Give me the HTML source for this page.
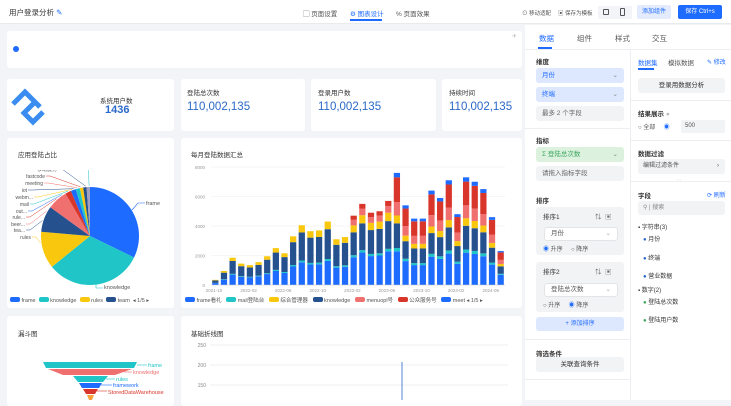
<!DOCTYPE html>
<html><head><meta charset="utf-8">
<style>
*{margin:0;padding:0;box-sizing:border-box}
body{width:731px;height:400px;overflow:hidden;background:#f2f4f7;font-family:"Liberation Sans","Noto Sans CJK SC",sans-serif;font-size:7px;color:#333;position:relative}
.a{position:absolute}
.card{position:absolute;background:#fff;border-radius:3px}
.t{position:absolute;white-space:nowrap}
.pill{position:absolute;border-radius:3px;padding-left:6px;line-height:15px;font-size:6.5px}
</style></head><body>
<!-- top bar -->
<div class="a" style="left:0;top:0;width:731px;height:24px;background:#fff;border-bottom:1px solid #e8eaee"></div>
<div class="t" style="left:9px;top:7px;font-size:7.5px">用户登录分析 <span style="color:#1e6bff">✎</span></div>
<div class="t" style="left:303px;top:8px;font-size:6.5px;color:#555">▢ 页面设置</div>
<div class="t" style="left:350px;top:8px;font-size:6.5px;color:#1e6bff">⚙ 图表设计</div>
<div class="a" style="left:350px;top:19px;width:32px;height:1.5px;background:#1e6bff"></div>
<div class="t" style="left:396px;top:8px;font-size:6.5px;color:#555">% 页面效果</div>
<div class="t" style="left:522px;top:9px;font-size:5.5px;color:#555">⊙ 移动适配</div>
<div class="t" style="left:558px;top:9px;font-size:5.5px;color:#555">▣ 保存为模板</div>
<div class="a" style="left:598px;top:6px;width:34px;height:13px;background:#f2f4f7;border-radius:2px"></div>
<div class="a" style="left:603px;top:9px;width:6px;height:6px;border:1px solid #555;border-radius:1px"></div>
<div class="a" style="left:620px;top:8px;width:5px;height:8px;border:1px solid #555;border-radius:1px"></div>
<div class="a" style="left:637px;top:5px;width:34px;height:14px;background:#e3ebfd;border-radius:2px;color:#1e6bff;font-size:6px;text-align:center;line-height:14px">添加组件</div>
<div class="a" style="left:678px;top:5px;width:44px;height:14px;background:#1e6bff;border-radius:2px;color:#fff;font-size:6px;text-align:center;line-height:14px">保存 Ctrl+s</div>

<!-- banner -->
<div class="card" style="left:7px;top:31px;width:515px;height:37px"></div>
<div class="a" style="left:13px;top:46px;width:6px;height:6px;border-radius:50%;background:#1e6bff"></div>
<div class="t" style="left:512px;top:33px;color:#bbb;font-size:6px">✈</div>

<!-- KPIs -->
<div class="card" style="left:7px;top:79px;width:167px;height:52px"></div>
<svg class="a" style="left:10px;top:84px" width="44" height="44" viewBox="0 0 44 44">
<g fill="none" stroke="#3a8cf0" stroke-width="5" stroke-linejoin="miter">
<polyline points="3,20 15,8 30,23"/>
<polyline points="25,18 14,29 23,38 33,28"/>
</g></svg>
<div class="t" style="left:100px;top:95px;font-size:6.5px">系统用户数</div>
<div class="t" style="left:105px;top:104px;font-size:11px;color:#2a68c8;font-weight:bold">1436</div>
<div class="card" style="left:181px;top:79px;width:124px;height:52px"></div>
<div class="t" style="left:187px;top:87px;font-size:6.5px">登陆总次数</div>
<div class="t" style="left:187px;top:101px;font-size:11.5px;color:#2a68c8">110,002,135</div>
<div class="card" style="left:311px;top:79px;width:125px;height:52px"></div>
<div class="t" style="left:318px;top:87px;font-size:6.5px">登录用户数</div>
<div class="t" style="left:318px;top:101px;font-size:11.5px;color:#2a68c8">110,002,135</div>
<div class="card" style="left:442px;top:79px;width:80px;height:52px"></div>
<div class="t" style="left:449px;top:87px;font-size:6.5px">持续时间</div>
<div class="t" style="left:449px;top:101px;font-size:11.5px;color:#2a68c8">110,002,135</div>

<!-- pie card -->
<div class="card" style="left:7px;top:138px;width:167px;height:170px"></div>
<div class="t" style="left:18px;top:149px;font-size:6.5px">应用登陆占比</div>
<svg class="a" style="left:0;top:170px" width="174" height="140" id="pie"></svg>
<div class="t" style="left:146px;top:201px;font-size:5.5px;color:#555">frame</div>
<div class="t" style="left:104px;top:285px;font-size:5.5px;color:#555">knowledge</div>
<div class="a" style="left:10px;top:297px;font-size:5.5px;color:#555;white-space:nowrap">
<span style="display:inline-block;width:10px;height:5px;background:#1e6bff;border-radius:2px"></span> frame &nbsp;<span style="display:inline-block;width:10px;height:5px;background:#1fc5c7;border-radius:2px"></span> knowledge &nbsp;<span style="display:inline-block;width:10px;height:5px;background:#f9c80e;border-radius:2px"></span> rules &nbsp;<span style="display:inline-block;width:10px;height:5px;background:#25518f;border-radius:2px"></span> team &nbsp;◂ 1/5 ▸</div>

<!-- bar card -->
<div class="card" style="left:181px;top:138px;width:341px;height:170px"></div>
<div class="t" style="left:191px;top:149px;font-size:6.5px">每月登陆数据汇总</div>
<svg class="a" style="left:181px;top:160px" width="341" height="135" id="bar"></svg>
<div class="a" style="left:185px;top:296px;font-size:5.5px;color:#555;white-space:nowrap">
<span style="display:inline-block;width:10px;height:5px;background:#1e6bff;border-radius:2px"></span> frame看礼 &nbsp;&nbsp;<span style="display:inline-block;width:10px;height:5px;background:#1fc5c7;border-radius:2px"></span> mail登陆台 &nbsp;&nbsp;<span style="display:inline-block;width:10px;height:5px;background:#f9c80e;border-radius:2px"></span> 综合管理器 &nbsp;&nbsp;<span style="display:inline-block;width:10px;height:5px;background:#25518f;border-radius:2px"></span> knowledge &nbsp;&nbsp;<span style="display:inline-block;width:10px;height:5px;background:#f07070;border-radius:2px"></span> menuopl号 &nbsp;&nbsp;<span style="display:inline-block;width:10px;height:5px;background:#d9362b;border-radius:2px"></span> 公众服务号 &nbsp;&nbsp;<span style="display:inline-block;width:10px;height:5px;background:#1e6bff;border-radius:2px"></span> meet ◂ 1/5 ▸</div>

<!-- funnel card -->
<div class="card" style="left:7px;top:316px;width:167px;height:90px"></div>
<div class="t" style="left:18px;top:328px;font-size:6.5px">漏斗图</div>
<svg class="a" style="left:0;top:360px" width="174" height="40">
<polygon points="43,2 137,2 134,8 46,8" fill="#1fc5c7"/>
<polygon points="48,9 132,9 115,15 63,15" fill="#f07070"/>
<polygon points="73,16 108,16 103,22 78,22" fill="#1fc5c7"/>
<polygon points="79,23 102,23 99,28 82,28" fill="#1e6bff"/>
<polygon points="83,29 98,29 95,34 86,34" fill="#d9362b"/>
<polygon points="87,35 94,35 92,40 89,40" fill="#f9a23b"/>
<g stroke-width="0.6"><line x1="137" y1="5" x2="147" y2="5" stroke="#1fc5c7"/><line x1="124" y1="12" x2="132" y2="12" stroke="#f07070"/><line x1="106" y1="19" x2="115" y2="19" stroke="#1fc5c7"/><line x1="101" y1="25" x2="112" y2="25" stroke="#1e6bff"/><line x1="97" y1="31" x2="107" y2="31" stroke="#d9362b"/></g>
<g font-size="5.5" font-family="Liberation Sans"><text x="148" y="7" fill="#1fc5c7">frame</text><text x="133" y="14" fill="#f07070">knowledge</text><text x="116" y="21" fill="#1fc5c7">rules</text><text x="113" y="27" fill="#1e6bff">framework</text><text x="108" y="34" fill="#d9362b">StoredDataWarehouse</text></g>
</svg>

<!-- line card -->
<div class="card" style="left:181px;top:316px;width:341px;height:90px"></div>
<div class="t" style="left:191px;top:328px;font-size:6.5px">基础折线图</div>
<svg class="a" style="left:181px;top:338px" width="341" height="62">
<g stroke="#e8eaee" stroke-width="0.7"><line x1="29" y1="7" x2="327" y2="7"/><line x1="29" y1="27" x2="327" y2="27"/><line x1="29" y1="47" x2="327" y2="47"/></g>
<g font-size="5" fill="#888" font-family="Liberation Sans" text-anchor="end"><text x="25" y="9">250</text><text x="25" y="29">200</text><text x="25" y="49">150</text></g>
<line x1="221" y1="24" x2="221" y2="62" stroke="#2a68c8" stroke-width="0.8"/>
</svg>

<!-- right panel -->
<div class="a" style="left:525px;top:25px;width:206px;height:375px;background:#fff"></div>
<div class="a" style="left:525px;top:49px;width:206px;height:1px;background:#eceef2"></div>
<div class="t" style="left:539px;top:33px;font-size:7.5px;color:#1e6bff">数据</div>
<div class="a" style="left:538px;top:47px;width:14px;height:1.5px;background:#1e6bff"></div>
<div class="t" style="left:577px;top:33px;font-size:7.5px;color:#555">组件</div>
<div class="t" style="left:615px;top:33px;font-size:7.5px;color:#555">样式</div>
<div class="t" style="left:652px;top:33px;font-size:7.5px;color:#555">交互</div>
<div class="a" style="left:630px;top:50px;width:1px;height:350px;background:#eceef2"></div>
<!-- left column -->
<div class="t" style="left:536px;top:56px;font-size:6.5px;font-weight:bold">维度</div>
<div class="pill" style="left:536px;top:68px;width:88px;background:#dde7fd;color:#1e6bff">月份<span style="position:absolute;right:6px;color:#888">⌄</span></div>
<div class="pill" style="left:536px;top:87px;width:88px;background:#dde7fd;color:#1e6bff">终端<span style="position:absolute;right:6px;color:#888">⌄</span></div>
<div class="pill" style="left:536px;top:106px;width:88px;background:#f2f3f5;color:#666">最多 2 个字段</div>
<div class="a" style="left:525px;top:128px;width:105px;height:1px;background:#eceef2"></div>
<div class="t" style="left:536px;top:135px;font-size:6.5px;font-weight:bold">指标</div>
<div class="pill" style="left:536px;top:147px;width:88px;background:#dcf2df;color:#3aa55a">Σ 登陆总次数<span style="position:absolute;right:6px;color:#888">⌄</span></div>
<div class="pill" style="left:536px;top:166px;width:88px;background:#f2f3f5;color:#666">请拖入指标字段</div>
<div class="t" style="left:536px;top:195px;font-size:6.5px;font-weight:bold">排序</div>
<div class="a" style="left:536px;top:207px;width:88px;height:48px;background:#f2f3f5;border-radius:3px"></div>
<div class="t" style="left:543px;top:211px;font-size:6.5px">排序1<span style="position:absolute;left:52px;color:#666">⇅ &nbsp;▣</span></div>
<div class="pill" style="left:544px;top:227px;width:74px;background:#fff;border:1px solid #e2e4e8;color:#555;line-height:12px">月份<span style="position:absolute;right:6px;color:#aaa">⌄</span></div>
<div class="t" style="left:543px;top:244px;font-size:6px;color:#555"><span style="color:#1e6bff">◉</span> 升序 &nbsp;&nbsp;&nbsp;&nbsp;○ 降序</div>
<div class="a" style="left:536px;top:262px;width:88px;height:50px;background:#f2f3f5;border-radius:3px"></div>
<div class="t" style="left:543px;top:266px;font-size:6.5px">排序2<span style="position:absolute;left:52px;color:#666">⇅ &nbsp;▣</span></div>
<div class="pill" style="left:544px;top:283px;width:74px;background:#fff;border:1px solid #e2e4e8;color:#555;line-height:12px">登陆总次数<span style="position:absolute;right:6px;color:#aaa">⌄</span></div>
<div class="t" style="left:543px;top:300px;font-size:6px;color:#555">○ 升序 &nbsp;&nbsp;&nbsp;&nbsp;<span style="color:#1e6bff">◉</span> 降序</div>
<div class="a" style="left:536px;top:317px;width:88px;height:14px;background:#dde7fd;border-radius:3px;color:#1e6bff;font-size:6px;text-align:center;line-height:14px">+ 添加排序</div>
<div class="a" style="left:525px;top:339px;width:105px;height:1px;background:#eceef2"></div>
<div class="t" style="left:536px;top:348px;font-size:6.5px;font-weight:bold">筛选条件</div>
<div class="a" style="left:536px;top:357px;width:88px;height:15px;background:#f2f3f5;border-radius:3px;font-size:6.5px;text-align:center;line-height:15px">关联查询条件</div>
<div class="a" style="left:525px;top:379px;width:105px;height:1px;background:#eceef2"></div>
<!-- right column -->
<div class="t" style="left:638px;top:57px;font-size:6.5px;color:#1e6bff">数据集</div>
<div class="a" style="left:638px;top:68px;width:16px;height:1.5px;background:#1e6bff"></div>
<div class="t" style="left:668px;top:57px;font-size:6.5px;color:#555">模拟数据</div>
<div class="t" style="left:707px;top:57px;font-size:6px;color:#1e6bff">✎ 修改</div>
<div class="a" style="left:638px;top:78px;width:87px;height:15px;background:#f2f3f5;border-radius:3px;font-size:6.5px;text-align:center;line-height:15px">登录用数据分析</div>
<div class="a" style="left:630px;top:100px;width:101px;height:1px;background:#eceef2"></div>
<div class="t" style="left:638px;top:108px;font-size:6.5px;font-weight:bold">结果展示 <span style="color:#bbb">●</span></div>
<div class="t" style="left:638px;top:122px;font-size:6px;color:#555">○ 全部 &nbsp;&nbsp;&nbsp;&nbsp;<span style="color:#1e6bff">◉</span></div>
<div class="a" style="left:681px;top:120px;width:44px;height:13px;background:#f2f3f5;border-radius:2px;font-size:6px;line-height:13px;padding-left:4px;color:#555">500</div>
<div class="a" style="left:630px;top:140px;width:101px;height:1px;background:#eceef2"></div>
<div class="t" style="left:638px;top:148px;font-size:6.5px;font-weight:bold">数据过滤</div>
<div class="a" style="left:638px;top:159px;width:87px;height:15px;background:#f2f3f5;border-radius:3px;font-size:6px;line-height:15px;padding-left:5px;color:#555">编辑过滤条件<span style="position:absolute;right:6px">›</span></div>
<div class="a" style="left:630px;top:181px;width:101px;height:1px;background:#eceef2"></div>
<div class="t" style="left:676px;top:177px;font-size:5px;color:#bbb">⋯</div>
<div class="t" style="left:638px;top:190px;font-size:6.5px;font-weight:bold">字段</div>
<div class="t" style="left:707px;top:190px;font-size:6px;color:#1e6bff">⟳ 刷新</div>
<div class="a" style="left:638px;top:201px;width:87px;height:14px;background:#f2f3f5;border-radius:3px;font-size:6px;line-height:14px;padding-left:5px;color:#888">⚲ | 搜索</div>
<div class="t" style="left:638px;top:222px;font-size:6px">▪ 字符串(3)</div>
<div class="t" style="left:643px;top:234px;font-size:6px"><span style="color:#2a68c8">●</span> 月份</div>
<div class="t" style="left:643px;top:253px;font-size:6px"><span style="color:#2a68c8">●</span> 终端</div>
<div class="t" style="left:643px;top:271px;font-size:6px"><span style="color:#2a68c8">●</span> 营业数据</div>
<div class="t" style="left:638px;top:285px;font-size:6px">▪ 数字(2)</div>
<div class="t" style="left:643px;top:297px;font-size:6px"><span style="color:#3aa55a">●</span> 登陆总次数</div>
<div class="t" style="left:643px;top:315px;font-size:6px"><span style="color:#3aa55a">●</span> 登陆用户数</div>

<script>
var NS="http://www.w3.org/2000/svg";
function el(p,t,a){var e=document.createElementNS(NS,t);for(var k in a)e.setAttribute(k,a[k]);p.appendChild(e);return e;}
// pie
var pie=document.getElementById('pie'),cx=90,cy=66,r=49;
var sl=[[0,116,'#1e6bff'],[116,231,'#1fc5c7'],[231,275,'#f9c80e'],[275,306,'#25518f'],[306,330,'#f07070'],[330,337,'#d9362b'],[337,343,'#1e6bff'],[343,348,'#1fc5c7'],[348,352,'#f9c80e'],[352,356,'#25518f'],[356,360,'#a0a0c0']];
function pt(a,rr){a=a*Math.PI/180;return [cx+rr*Math.sin(a),cy-rr*Math.cos(a)];}
sl.forEach(function(s){var p1=pt(s[0],r),p2=pt(s[1],r);var lg=(s[1]-s[0])>180?1:0;
el(pie,'path',{d:'M'+cx+','+cy+'L'+p1[0]+','+p1[1]+'A'+r+','+r+' 0 '+lg+' 1 '+p2[0]+','+p2[1]+'Z',fill:s[2]});});
var labs=['标签管理','移动服务','fastcode','meeting','iot','webm...','mail','out...','rule...','beer...','tea...','rules'];
var lc=['#1fc5c7','#25518f','#d9362b','#f07070','#25518f','#f9c80e','#1fc5c7','#1e6bff','#d9362b','#f07070','#25518f','#f9c80e'];
var ang=[359,355,349,345,341,339,334,326,318,300,288,262];
var lx=[84,58,46,44,28,34,30,28,26,26,26,32];
var ly=[-7,-1,6,13,20,27,34,41,47,54,60,67];
labs.forEach(function(l,i){var x=lx[i],y=ly[i];
var t=el(pie,'text',{x:x-1,y:y+2,'font-size':5,fill:'#555','font-family':'Liberation Sans','text-anchor':'end'});t.textContent=l;
var p=pt(ang[i],r+1);
el(pie,'polyline',{points:x+','+y+' '+(x+4)+','+y+' '+p[0]+','+p[1],fill:'none',stroke:lc[i],'stroke-width':0.5});});
el(pie,'polyline',{points:'132,40 138,33 145,33',fill:'none',stroke:'#1e6bff','stroke-width':0.6});
el(pie,'polyline',{points:'96,114 96,118 103,118',fill:'none',stroke:'#1fc5c7','stroke-width':0.6});
// bars
var bar=document.getElementById('bar');
var yTop=7,yBot=125,x0=30,x1=324;
[0,2000,4000,6000,8000].forEach(function(v){var y=yBot-(yBot-yTop)*v/8000;el(bar,'line',{x1:x0,x2:x1,y1:y,y2:y,stroke:'#eceef2','stroke-width':0.6});
var t=el(bar,'text',{x:x0-6,y:y+2,'font-size':4.5,fill:'#999','text-anchor':'end','font-family':'Liberation Sans'});t.textContent=v;});
var tot=[350,950,1850,1450,1350,1550,1950,2500,2150,3300,4050,3650,3700,4300,3100,3250,4700,5500,4900,5000,5700,7600,5400,4500,4500,6400,5900,7100,4800,7300,7000,6500,4600,2300];
var n=tot.length,w=(x1-x0)/n;
tot.forEach(function(T,i){var segs;
if(i<16){segs=[[.38,'#1e6bff'],[.03,'#1fc5c7'],[.47,'#25518f'],[.12,'#f9c80e']];}
else if(i<21){segs=[[.4,'#1e6bff'],[.03,'#1fc5c7'],[.33,'#25518f'],[.1,'#f9c80e'],[.08,'#f07070'],[.06,'#d9362b']];}
else{segs=[[.3,'#1e6bff'],[.03,'#1fc5c7'],[.22,'#25518f'],[.07,'#f9c80e'],[.12,'#f07070'],[.22,'#d9362b'],[.04,'#1e6bff']];}
var y=yBot;segs.forEach(function(s){var h=(yBot-yTop)*T/8000*s[0];y-=h;el(bar,'rect',{x:x0+i*w+1.2,y:y,width:w-2.4,height:h,fill:s[1]});});});
['2021-10','2022-02','2022-06','2022-10','2023-02','2023-06','2023-10','2024-02','2024-06'].forEach(function(l,i){var t=el(bar,'text',{x:x0+i*4*w+3,y:yBot+7,'font-size':4.5,fill:'#999','text-anchor':'middle','font-family':'Liberation Sans'});t.textContent=l;});
el(bar,'line',{x1:x0,x2:x1,y1:yBot,y2:yBot,stroke:'#ccc','stroke-width':0.5});
</script>
</body></html>
